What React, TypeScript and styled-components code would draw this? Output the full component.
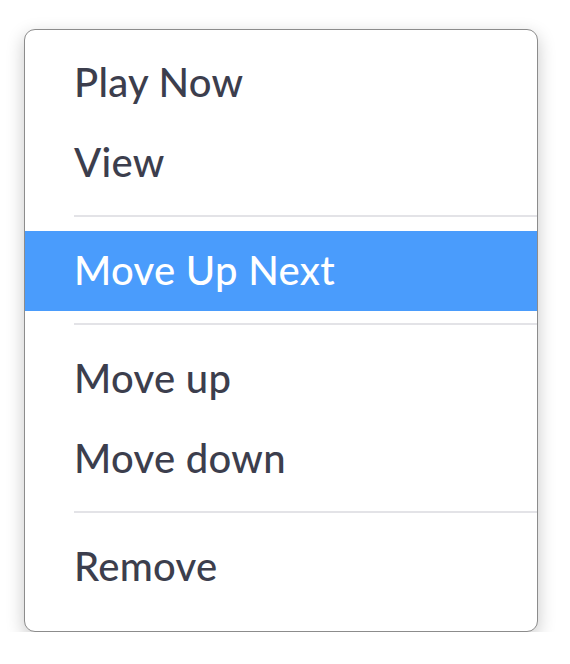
import React from "react";
import styled, { createGlobalStyle } from "styled-components";

const Global = createGlobalStyle`
  html, body { margin: 0; padding: 0; background: #ffffff; }
  body { font-family: Lato, "Open Sans", sans-serif; }
`;

const Page = styled.div`
  padding: 29px 0 0 24px;
`;

const Menu = styled.ul`
  box-sizing: border-box;
  width: 514px;
  margin: 0;
  padding: 13px 0 24px;
  list-style: none;
  background: #ffffff;
  border: 1.5px solid #8c8c8c;
  border-radius: 11px;
  box-shadow: 0 6px 18px rgba(0, 0, 0, 0.22);
  overflow: hidden;
`;

const Item = styled.li<{ $active?: boolean }>`
  height: 80px;
  line-height: 78px;
  padding-left: 49px;
  font-size: 40px;
  font-weight: 500;
  letter-spacing: 0.3px;
  color: ${(p) => (p.$active ? "#ffffff" : "#3c3e4d")};
  background: ${(p) => (p.$active ? "#4a9cfc" : "transparent")};
  white-space: nowrap;
`;

const Separator = styled.li`
  height: 2px;
  margin: 12px 0 14px 49px;
  background: #e3e3e7;
`;

type Entry = { label: string; active?: boolean } | "sep";

const entries: Entry[] = [
  { label: "Play Now" },
  { label: "View" },
  "sep",
  { label: "Move Up Next", active: true },
  "sep",
  { label: "Move up" },
  { label: "Move down" },
  "sep",
  { label: "Remove" },
];

export default function App() {
  return (
    <>
      <Global />
      <Page>
        <Menu>
          {entries.map((e, i) =>
            e === "sep" ? (
              <Separator key={i} />
            ) : (
              <Item key={i} $active={e.active}>
                {e.label}
              </Item>
            )
          )}
        </Menu>
      </Page>
    </>
  );
}
